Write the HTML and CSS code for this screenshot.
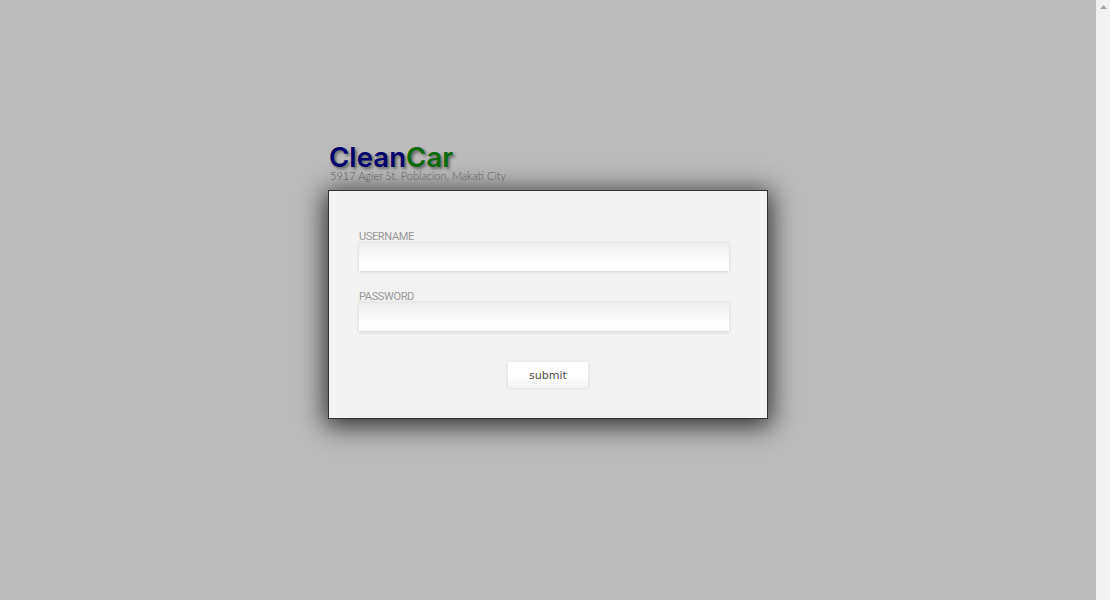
FILE: index.html
```html
<!DOCTYPE html>
<html lang="en">

<head>
    <meta charset="UTF-8">
    <title>CleanCar</title>
    <link rel="stylesheet" href="styles.css">
</head>

<body>
    <div class="page">
        <div class="login">
            <div class="brand">
                <h1 class="logo">Clean<span class="logo-green">Car</span></h1>
                <p class="address">5917 Agier St. Poblacion, Makati City</p>
            </div>
            <form class="login-box">
                <label class="field-label" for="username">USERNAME</label>
                <input class="field" id="username" type="text">
                <label class="field-label" for="password">PASSWORD</label>
                <input class="field" id="password" type="password">
                <div class="actions">
                    <button class="submit" type="button">submit</button>
                </div>
            </form>
        </div>
    </div>
    <div class="scrollbar">
        <svg class="arrow" width="7" height="4" viewBox="0 0 7 4"><path d="M3.5 0L7 4H0z" fill="#a3a3a3"/></svg>
    </div>
</body>

</html>
```

FILE: styles.css
```css
html,
body {
    margin: 0;
    padding: 0;
    height: 100%;
    overflow: hidden;
}

body {
    display: flex;
    background: #bbbbbb;
    font-family: "Liberation Sans", Arial, sans-serif;
}

.page {
    flex: 1;
    display: flex;
    justify-content: center;
    padding-top: 145px;
}

.login {
    width: 440px;
}

/* logo and address above the box */
.brand {
    height: 45px;
    padding-left: 1px;
    box-sizing: border-box;
}

.logo {
    margin: 0;
    font-family: "Inter", "Liberation Sans", sans-serif;
    font-size: 27.5px;
    line-height: 25px;
    font-weight: 600;
    letter-spacing: 0.1px;
    color: #00006e;
    text-shadow: 2px 2px 3px #666666;
}

.logo-green {
    color: #0b6b0b;
}

.address {
    margin: 0 0 0 1px;
    font-family: "Lato", sans-serif;
    font-size: 11px;
    line-height: 12px;
    font-weight: 300;
    color: #666666;
}

.login-box {
    position: relative;
    height: 229px;
    box-sizing: border-box;
    padding: 40px 38px 0 30px;
    background: #f2f2f2;
    border: 1px solid #333333;
    box-shadow: 0 4px 24px 3px #2e2e2e;
}

.field-label {
    display: block;
    font-family: "Roboto", "Liberation Sans", sans-serif;
    font-size: 11px;
    line-height: 11px;
    letter-spacing: -0.35px;
    color: #999999;
}

.field {
    display: block;
    width: 100%;
    height: 29px;
    margin-bottom: 20px;
    padding: 0;
    box-sizing: border-box;
    border: 0;
    border-top: 1px solid #e8e8e8;
    background: linear-gradient(#eeeeee, #ffffff 70%);
    box-shadow: 0 1px 3px #d0d0d0;
}

.actions {
    display: flex;
    justify-content: center;
    padding: 11px 0 0 8px;
}

.submit {
    width: 80px;
    height: 26px;
    padding: 0;
    border: 0;
    background: linear-gradient(#ffffff 50%, #f2f2f2);
    box-shadow: 0 0 3px #d4d4d4;
    font-family: "DejaVu Sans", Verdana, sans-serif;
    font-size: 11px;
    color: #4d4d4d;
}

/* fake browser scrollbar */
.scrollbar {
    width: 14px;
    background: #f1f1f1;
    display: flex;
    justify-content: center;
    align-items: flex-start;
}

.arrow {
    margin-top: 5px;
}
```
